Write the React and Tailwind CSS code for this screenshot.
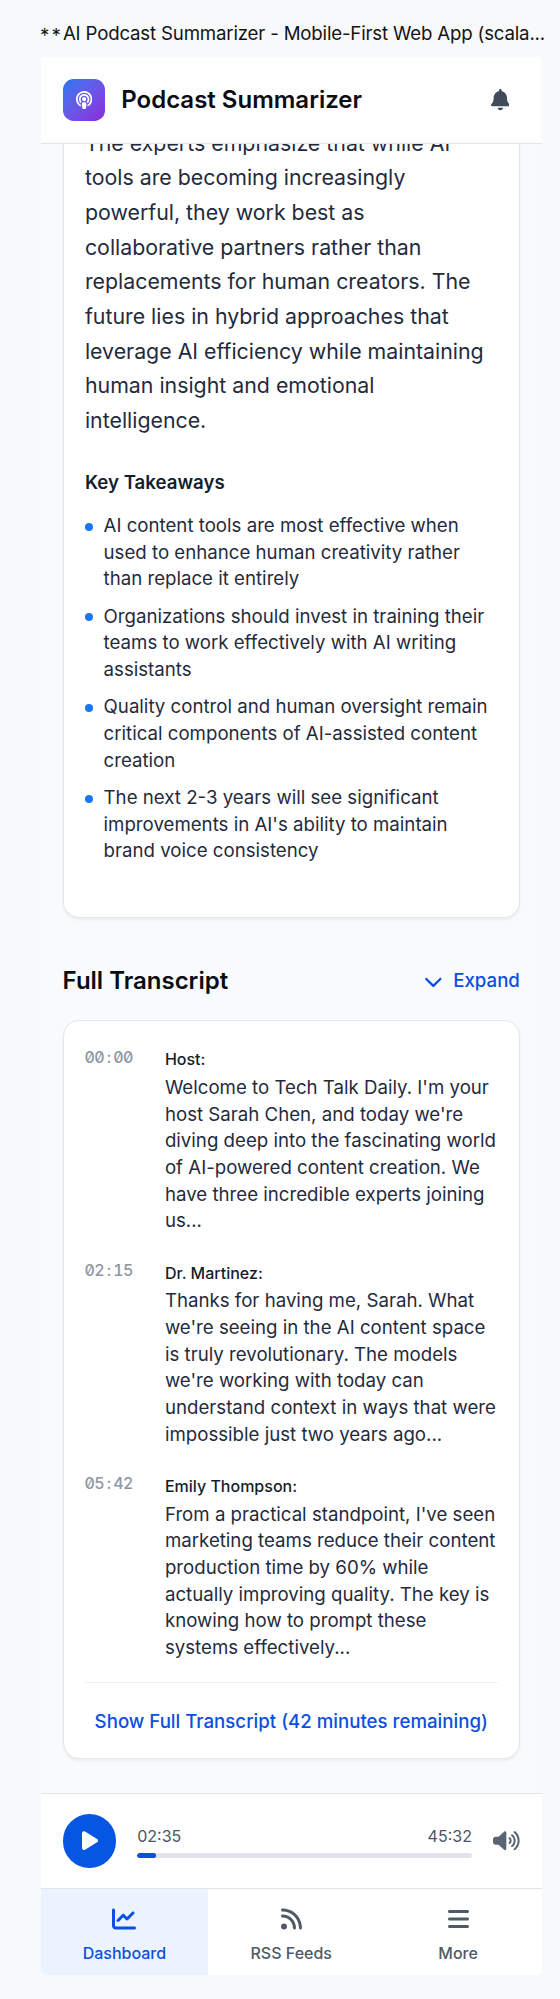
import React from "react";
import {
  FaPodcast,
  FaBell,
  FaChevronDown,
  FaPlay,
  FaVolumeHigh,
  FaChartLine,
  FaRss,
  FaBars,
} from "react-icons/fa6";

const takeaways = [
  "AI content tools are most effective when used to enhance human creativity rather than replace it entirely",
  "Organizations should invest in training their teams to work effectively with AI writing assistants",
  "Quality control and human oversight remain critical components of AI-assisted content creation",
  "The next 2-3 years will see significant improvements in AI's ability to maintain brand voice consistency",
];

const transcript = [
  {
    time: "00:00",
    speaker: "Host:",
    text: "Welcome to Tech Talk Daily. I'm your host Sarah Chen, and today we're diving deep into the fascinating world of AI-powered content creation. We have three incredible experts joining us...",
  },
  {
    time: "02:15",
    speaker: "Dr. Martinez:",
    text: "Thanks for having me, Sarah. What we're seeing in the AI content space is truly revolutionary. The models we're working with today can understand context in ways that were impossible just two years ago...",
  },
  {
    time: "05:42",
    speaker: "Emily Thompson:",
    text: "From a practical standpoint, I've seen marketing teams reduce their content production time by 60% while actually improving quality. The key is knowing how to prompt these systems effectively...",
  },
];

function Header() {
  return (
    <header className="relative z-10 flex h-[87px] shrink-0 items-center border-b-[1.33px] border-[#e2e4e9] bg-[#fefefe] px-[21.6px]">
      <div className="flex h-[42.67px] w-[42.67px] items-center justify-center rounded-[10.67px] bg-linear-to-br from-[#1877f2] to-[#8a24dc] text-white">
        <FaPodcast className="h-[18.67px] w-[16.33px]" />
      </div>
      <h1 className="ml-4 text-[24px] leading-8 font-semibold whitespace-nowrap text-[#0b0c14]">
        Podcast Summarizer
      </h1>
      <FaBell className="mr-[10.67px] ml-auto h-[21.33px] w-[18.67px] text-[#414b59]" />
    </header>
  );
}

function SummaryCard() {
  return (
    <section className="-mt-[18.5px] rounded-b-2xl border-[1.33px] border-t-0 border-[#e4e6eb] bg-white px-[21.33px] pb-[52px] shadow-[0_1.33px_2.67px_rgba(0,0,0,0.05)]">
      <p className="text-[21.33px] leading-[34.67px]">
        The experts emphasize that while AI tools are becoming increasingly powerful, they work
        best as collaborative partners rather than replacements for human creators. The future
        lies in hybrid approaches that leverage AI efficiency while maintaining human insight and
        emotional intelligence.
      </p>
      <h3 className="mt-[32.5px] text-[18.67px] leading-[26.67px] font-semibold text-[#141d2d]">
        Key Takeaways
      </h3>
      <ul className="mt-[16.3px] flex flex-col gap-[10.67px]">
        {takeaways.map((t) => (
          <li key={t} className="flex gap-[10.67px]">
            <span className="mt-[9.5px] h-2 w-2 shrink-0 rounded-full bg-[#1877f2]" />
            <span className="text-[18.67px] leading-[26.67px]">{t}</span>
          </li>
        ))}
      </ul>
    </section>
  );
}

function Timestamp({ value }) {
  return (
    <span className="-mt-[0.7px] flex h-[21.33px] w-[80px] shrink-0 text-[16px] leading-[21.33px] font-medium text-[#8f96a3] tabular-nums slashed-zero">
      {value.split("").map((c, i) => (
        <span key={i} className="flex w-[9.6px] justify-center">
          {c}
        </span>
      ))}
    </span>
  );
}

function TranscriptCard() {
  return (
    <section className="mt-[22px] rounded-2xl border-[1.33px] border-[#e4e6eb] bg-white px-[21.33px] pt-[26.67px] shadow-[0_1.33px_2.67px_rgba(0,0,0,0.05)]">
      <div className="flex flex-col gap-[26.67px]">
        {transcript.map((e) => (
          <div key={e.time} className="flex">
            <Timestamp value={e.time} />
            <div className="min-w-0">
              <div className="pt-[2px] text-[16px] leading-[21.33px] font-medium text-[#141d2d]">
                {e.speaker}
              </div>
              <p className="mt-[4.5px] -mb-[1.17px] text-[18.67px] leading-[26.67px]">{e.text}</p>
            </div>
          </div>
        ))}
      </div>
      <div className="mt-[21.67px] border-t-[1.33px] border-[#f0f1f3] pt-[26px] pb-[22px] text-center">
        <button className="text-[18.67px] leading-[26.67px] font-medium whitespace-nowrap text-[#0a4fe0]">
          Show Full Transcript (42 minutes remaining)
        </button>
      </div>
    </section>
  );
}

function Player() {
  return (
    <div className="flex h-[95px] shrink-0 items-center border-t-[1.33px] border-[#e2e4e9] bg-white px-[21.6px]">
      <button className="flex h-[53.33px] w-[53.33px] shrink-0 items-center justify-center rounded-full bg-[#0557e3] text-white">
        <FaPlay className="ml-[2px] h-[21.33px] w-4" />
      </button>
      <div className="mx-[21.33px] mt-[2px] flex-1">
        <div className="flex justify-between text-[16px] leading-[21.33px] text-[#4b5463]">
          <span>02:35</span>
          <span>45:32</span>
        </div>
        <div className="mt-[5.33px] h-[5.33px] overflow-hidden rounded-full bg-[#e1e3e8]">
          <div className="h-full w-[5.7%] rounded-full bg-[#0a4fe0]" />
        </div>
      </div>
      <FaVolumeHigh className="h-[21.33px] w-[26.67px] text-[#5a6472]" />
    </div>
  );
}

function TabItem({ icon, label, active }) {
  return (
    <div
      className={
        active
          ? "flex flex-1 flex-col items-center bg-[#ebf4fe] pt-[17.5px] text-[#0a4fe0]"
          : "flex flex-1 flex-col items-center pt-[17.5px] text-[#4f5967]"
      }
    >
      {icon}
      <span className="mt-[12.5px] text-[16px] leading-[21.33px] font-medium">{label}</span>
    </div>
  );
}

export default function App() {
  return (
    <div className="h-[1999px] w-[560px] overflow-hidden bg-[#f7f9fb] pl-[41px] font-['Inter',sans-serif] text-[#1f2b3d]">
      <div className="h-[57px] pt-[21px] text-[18.67px] leading-[26.67px] tracking-[-0.18px] whitespace-nowrap text-[#141414]">
        <span className="relative top-[2px] -ml-px tracking-[2.1px]">**</span>
        AI Podcast Summarizer - Mobile-First Web App (scala...
      </div>
      <div className="flex h-[1918px] w-[500.5px] flex-col overflow-hidden rounded-b-[5px] bg-[#f9fafb]">
        <Header />
        <main className="min-h-0 flex-1 px-[21.6px]">
          <SummaryCard />
          <div className="mt-[45.5px] flex items-center justify-between">
            <h2 className="text-[24px] leading-[34px] font-semibold text-[#0b0c14]">
              Full Transcript
            </h2>
            <button className="mt-[1.5px] flex items-center gap-[11px] text-[18.67px] leading-[26.67px] font-medium text-[#0a4fe0]">
              <FaChevronDown className="h-[18.67px] w-[18.67px]" />
              Expand
            </button>
          </div>
          <TranscriptCard />
        </main>
        <Player />
        <nav className="flex h-[87px] shrink-0 border-t-[1.33px] border-[#e2e4e9] bg-white">
          <TabItem active icon={<FaChartLine className="h-6 w-6" />} label="Dashboard" />
          <TabItem icon={<FaRss className="h-6 w-[21px]" />} label="RSS Feeds" />
          <TabItem icon={<FaBars className="h-6 w-[21px]" />} label="More" />
        </nav>
      </div>
    </div>
  );
}
